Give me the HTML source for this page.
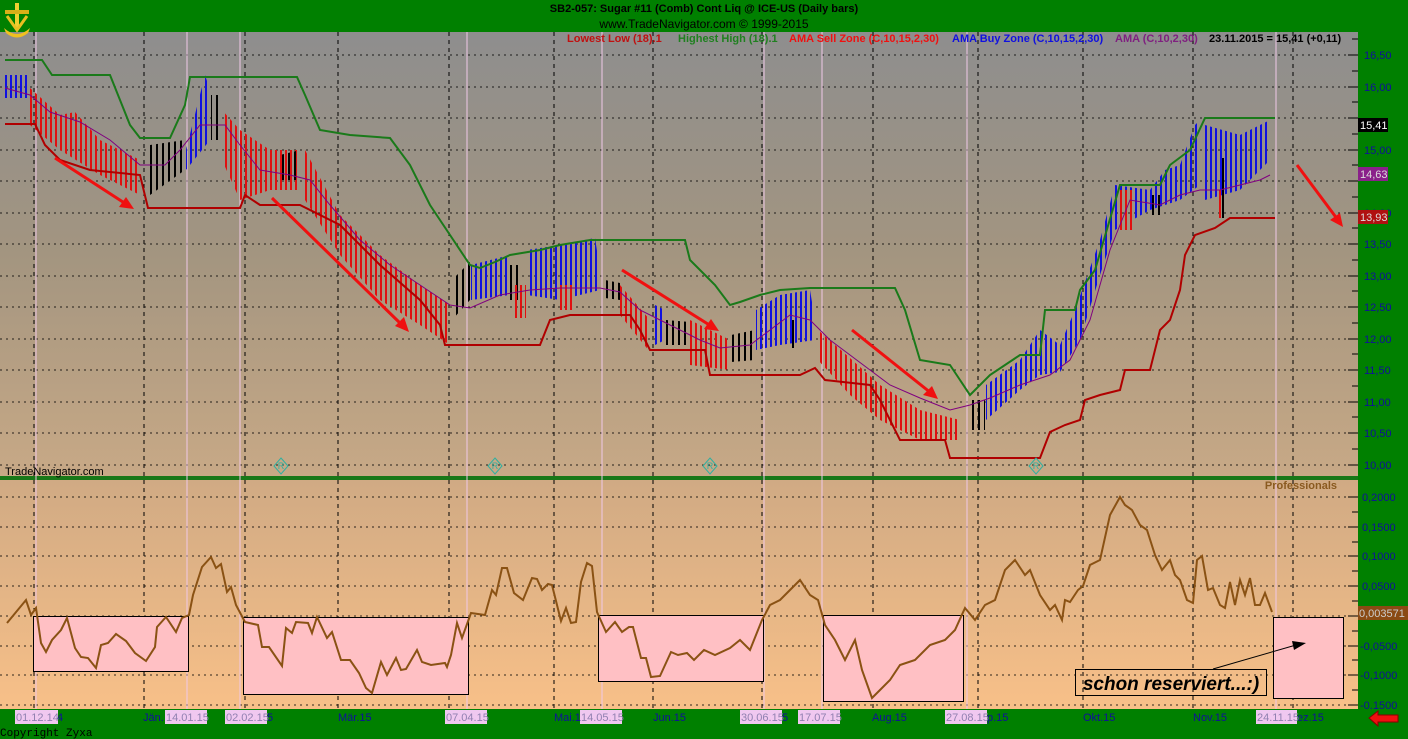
<!DOCTYPE html>
<html><head><meta charset="utf-8"><style>
html,body{margin:0;padding:0;width:1408px;height:739px;overflow:hidden;background:#008000;}
svg{display:block;font-family:"Liberation Sans",sans-serif;}
</style></head><body>
<svg width="1408" height="739" viewBox="0 0 1408 739" xmlns="http://www.w3.org/2000/svg">
<defs>
<linearGradient id="gt" x1="0" y1="0" x2="0" y2="1"><stop offset="0" stop-color="#8e8e8e"/><stop offset="0.5" stop-color="#a39580"/><stop offset="1" stop-color="#c8a986"/></linearGradient>
<linearGradient id="gb" x1="0" y1="0" x2="0" y2="1"><stop offset="0" stop-color="#d0aa84"/><stop offset="1" stop-color="#f8c088"/></linearGradient>
<pattern id="pb" width="5" height="4" patternUnits="userSpaceOnUse"><rect width="2" height="4" fill="#1010e0"/></pattern>
<pattern id="pr" width="5" height="4" patternUnits="userSpaceOnUse"><rect width="2" height="4" fill="#e01010"/></pattern>
<pattern id="pk" width="6" height="4" patternUnits="userSpaceOnUse"><rect width="2" height="4" fill="#000"/></pattern>
</defs>
<rect x="0" y="0" width="1408" height="32" fill="#008000"/>
<rect x="0" y="32" width="1358" height="445" fill="url(#gt)"/>
<rect x="0" y="480" width="1358" height="229" fill="url(#gb)"/>
<rect x="0" y="476" width="1358" height="4" fill="#187818"/>
<g stroke="#000" stroke-width="1" stroke-dasharray="2,4" opacity="0.8">
<path d="M0 55H1355M0 87H1355M0 118H1355M0 150H1355M0 181H1355M0 213H1355M0 244H1355M0 276H1355M0 307H1355M0 339H1355M0 370H1355M0 402H1355M0 433H1355M0 465H1355"/>
<path d="M0 497H1355M0 527H1355M0 556H1355M0 586H1355M0 616H1355M0 646H1355M0 675H1355M0 705H1355"/>
</g>
<g stroke="#f0c8e8" stroke-width="1">
<path d="M36 32V709M187 32V709M240 32V709M467 32V709M602 32V709M764 32V709M822 32V709M967 32V709M1276 32V709"/>
</g>
<g stroke="#000" stroke-width="1" stroke-dasharray="4,4">
<path d="M34 32V709M144 32V709M245 32V709M338 32V709M449 32V709M554 32V709M653 32V709M762 32V709M873 32V709M978 32V709M1083 32V709M1193 32V709M1293 32V709"/>
</g>
<g>
<polygon fill="url(#pb)" points="5,75 28,75 28,98 5,98"/>
<polygon fill="url(#pr)" points="30,88 60,115 75,112 100,140 140,160 140,195 100,175 60,150 30,125"/>
<polygon fill="url(#pk)" points="150,145 185,140 185,170 150,195"/>
<polygon fill="url(#pb)" points="186,150 205,75 210,90 210,140 186,170"/>
<polygon fill="url(#pk)" points="211,95 220,95 220,140 211,140"/>
<polygon fill="url(#pr)" points="222,110 240,130 270,150 300,150 300,190 270,190 240,200 222,160"/>
<polygon fill="url(#pk)" points="280,155 300,150 300,180 280,180"/>
<polygon fill="url(#pr)" points="305,150 340,215 380,255 420,285 450,305 450,345 420,325 380,300 340,255 305,200"/>
<polygon fill="url(#pk)" points="452,280 470,262 470,300 452,320"/>
<polygon fill="url(#pb)" points="471,265 510,255 510,295 471,300"/>
<polygon fill="url(#pk)" points="510,265 520,265 520,300 510,300"/>
<polygon fill="url(#pr)" points="515,285 526,285 526,318 515,318"/>
<polygon fill="url(#pb)" points="527,250 560,245 595,238 600,270 600,290 560,300 527,295"/>
<polygon fill="url(#pr)" points="560,285 575,285 575,310 560,310"/>
<polygon fill="url(#pk)" points="605,280 620,283 620,300 605,298"/>
<polygon fill="url(#pr)" points="620,285 650,320 650,352 620,315"/>
<polygon fill="url(#pb)" points="655,305 665,310 665,340 655,345"/>
<polygon fill="url(#pk)" points="666,320 690,322 690,345 666,345"/>
<polygon fill="url(#pr)" points="690,320 730,340 730,370 690,365"/>
<polygon fill="url(#pk)" points="731,335 755,330 755,360 731,362"/>
<polygon fill="url(#pb)" points="756,310 780,295 810,290 815,320 815,340 780,345 756,350"/>
<polygon fill="url(#pk)" points="790,320 798,320 798,348 790,348"/>
<polygon fill="url(#pr)" points="818,330 850,358 880,385 920,410 960,420 960,440 920,440 880,420 850,395 818,360"/>
<polygon fill="url(#pk)" points="970,400 985,400 985,430 970,430"/>
<polygon fill="url(#pb)" points="986,385 1020,360 1040,330 1060,345 1075,310 1100,240 1115,185 1150,190 1165,170 1180,165 1195,125 1200,120 1200,185 1180,200 1150,210 1115,230 1100,275 1080,340 1060,372 1040,375 1020,390 986,420"/>
<polygon fill="url(#pr)" points="1120,190 1135,190 1135,230 1120,230"/>
<polygon fill="url(#pk)" points="1150,195 1160,195 1160,215 1150,215"/>
<polygon fill="url(#pb)" points="1205,125 1240,135 1270,120 1270,160 1240,190 1205,200"/>
<path d="M1223 158V218" stroke="#000" stroke-width="2"/>
<path d="M1220 190V218" stroke="#e01010" stroke-width="2"/>
</g>
<polyline fill="none" stroke="#1a7a1a" stroke-width="2" points="5,60 42,60 52,75 110,75 120,100 130,125 140,138 170,138 185,105 190,77 297,77 305,95 320,130 350,135 390,138 410,165 430,205 450,235 470,265 480,268 495,262 510,255 540,250 560,245 590,240 685,240 690,260 700,270 715,285 730,305 740,302 760,295 780,290 810,288 895,288 905,310 920,360 950,365 960,380 970,395 990,375 1020,355 1040,355 1045,310 1075,310 1080,290 1095,270 1120,185 1160,185 1170,165 1190,150 1205,118 1275,118"/>
<polyline fill="none" stroke="#b00000" stroke-width="2" points="5,124 35,124 45,145 60,160 90,170 140,175 148,208 240,208 245,195 260,205 300,205 340,225 380,265 420,300 440,325 445,345 540,345 550,320 570,315 630,315 640,330 650,350 705,350 710,375 800,375 815,368 825,380 870,385 880,400 900,440 945,440 950,458 1040,458 1050,432 1065,425 1080,420 1085,400 1100,395 1120,390 1125,370 1150,370 1160,330 1170,320 1180,290 1185,255 1195,235 1215,228 1230,218 1275,218"/>
<polyline fill="none" stroke="#800080" stroke-width="1" points="5,88 30,95 50,112 80,122 110,140 140,165 165,165 180,150 200,125 225,125 240,145 260,170 290,175 310,180 330,205 360,240 390,265 420,285 450,305 470,308 500,295 530,290 560,288 600,288 620,292 640,310 670,325 700,340 720,348 750,345 770,330 790,315 810,320 830,340 850,355 870,370 890,385 920,398 950,410 970,405 990,398 1020,385 1050,375 1070,360 1090,320 1110,250 1130,200 1160,205 1180,195 1200,190 1220,190 1240,185 1260,180 1270,175"/>
<g stroke="#f01010" stroke-width="3" fill="#f01010">
<line x1="55" y1="158" x2="126" y2="204"/><polygon stroke="none" points="134,209 119,207 126,197"/>
<line x1="272" y1="198" x2="402" y2="325"/><polygon stroke="none" points="409,332 395,326 404,317"/>
<line x1="622" y1="270" x2="711" y2="326"/><polygon stroke="none" points="719,331 704,329 711,319"/>
<line x1="852" y1="330" x2="931" y2="393"/><polygon stroke="none" points="938,399 923,395 932,386"/>
<line x1="1297" y1="165" x2="1338" y2="220"/><polygon stroke="none" points="1343,227 1330,220 1340,213"/>
</g>
<g fill="none" stroke="#30b0a0" stroke-width="1">
<path d="M281 458l7 8-7 8-7-8z M495 458l7 8-7 8-7-8z M710 458l7 8-7 8-7-8z M1036 458l7 8-7 8-7-8z"/>
</g>
<g fill="#30b0a0" font-size="9" text-anchor="middle"><text x="281" y="469">R</text><text x="495" y="469">R</text><text x="710" y="469">R</text><text x="1036" y="469">R</text></g>
<text x="5" y="475" font-size="11" fill="#000">TradeNavigator.com</text>
<text x="1337" y="489" font-size="11" font-weight="bold" fill="#8a5a20" text-anchor="end">Professionals</text>
<g fill="#ffc0c4" stroke="#000" stroke-width="1">
<rect x="33.5" y="616.5" width="155" height="55"/>
<rect x="243.5" y="617.5" width="225" height="77"/>
<rect x="598.5" y="615.5" width="165" height="66"/>
<rect x="823.5" y="615.5" width="140" height="86"/>
<rect x="1273.5" y="617.5" width="70" height="81"/>
</g>
<polyline fill="none" stroke="#8a5214" stroke-width="2" points="7,623 26,600 31,615 36,608 41,643 46,652 52,640 61,630 67,618 75,648 81,657 88,658 96,668 101,645 108,643 116,634 126,641 135,653 146,661 155,647 157,627 166,617 176,632 182,618 189,615 193,595 202,567 211,557 216,568 221,564 227,592 231,587 236,605 245,622 258,625 262,647 269,647 282,666 286,628 292,633 296,622 308,623 312,633 317,617 327,638 332,632 341,660 350,660 359,673 366,688 372,693 381,662 387,675 396,658 401,670 406,669 417,650 422,662 431,665 445,663 447,667 451,655 457,623 462,638 471,613 485,615 492,590 496,595 502,568 507,568 514,593 523,600 532,578 537,579 542,590 548,584 552,585 561,621 566,608 571,623 576,622 581,582 587,563 592,566 597,612 606,632 615,622 622,632 629,627 633,627 641,658 646,658 651,677 660,676 671,652 678,655 687,653 694,660 704,650 715,655 730,648 740,640 750,650 762,620 770,605 780,600 800,580 810,595 818,600 825,625 835,640 845,660 855,640 862,670 872,698 880,690 890,680 900,665 915,660 930,645 945,640 955,630 965,608 975,620 985,605 995,600 1005,570 1015,560 1025,575 1030,570 1040,595 1050,610 1055,605 1062,620 1065,600 1070,602 1078,590 1083,586 1090,565 1100,560 1110,515 1120,497 1125,505 1132,510 1140,525 1147,530 1155,555 1162,570 1170,560 1175,575 1180,580 1187,600 1193,603 1197,560 1202,556 1208,590 1213,588 1220,605 1225,608 1230,582 1235,605 1240,580 1245,595 1250,578 1255,605 1260,605 1265,593 1272,612"/>
<rect x="1075.5" y="669.5" width="191" height="26" fill="none" stroke="#000"/>
<text x="1171" y="690" font-size="19" font-weight="bold" font-style="italic" text-anchor="middle" fill="#000">schon reserviert...:)</text>
<line x1="1213" y1="669" x2="1296" y2="645" stroke="#000" stroke-width="1"/>
<polygon points="1306,643 1294,650 1292,641" fill="#000"/>
<g font-size="11" fill="#000" text-anchor="middle">
<text x="704" y="12" font-weight="bold">SB2-057:  Sugar #11 (Comb) Cont Liq @ ICE-US  (Daily bars)</text>
<text x="704" y="28" font-size="12">www.TradeNavigator.com © 1999-2015</text>
</g>
<g font-size="11" font-weight="bold">
<text x="567" y="42" fill="#c01010">Lowest Low (18).1</text>
<text x="678" y="42" fill="#208020">Highest High (18).1</text>
<text x="789" y="42" fill="#f01010">AMA Sell Zone (C,10,15,2,30)</text>
<text x="952" y="42" fill="#1010e0">AMA Buy Zone (C,10,15,2,30)</text>
<text x="1115" y="42" fill="#802080">AMA (C,10,2,30)</text>
<text x="1209" y="42" fill="#000">23.11.2015 = 15,41 (+0,11)</text>
</g>
<g>
<rect x="15" y="3" width="4" height="26" fill="#f0d030"/>
<rect x="5" y="10" width="24" height="4" fill="#d8b018"/>
<path d="M7 16 L17 30 L27 16" fill="none" stroke="#e8c020" stroke-width="3"/>
<path d="M4 28 Q17 40 30 28 L28 33 Q17 42 6 33z" fill="#f0c020"/>
</g>
<rect x="1358" y="32" width="50" height="677" fill="#008000"/>
<g stroke="#000" stroke-width="1">
<path d="M1348 55H1358M1348 87H1358M1348 118H1358M1348 150H1358M1348 181H1358M1348 213H1358M1348 244H1358M1348 276H1358M1348 307H1358M1348 339H1358M1348 370H1358M1348 402H1358M1348 433H1358M1348 465H1358"/>
<path d="M1352 39H1358M1352 71H1358M1352 102H1358M1352 134H1358M1352 165H1358M1352 197H1358M1352 228H1358M1352 260H1358M1352 291H1358M1352 323H1358M1352 354H1358M1352 386H1358M1352 417H1358M1352 449H1358"/>
<path d="M1348 497H1358M1348 527H1358M1348 556H1358M1348 586H1358M1348 616H1358M1348 646H1358M1348 675H1358M1348 705H1358"/>
<path d="M1352 512H1358M1352 542H1358M1352 571H1358M1352 601H1358M1352 631H1358M1352 660H1358M1352 690H1358"/>
</g>
<g font-size="11" fill="#10109a">
<text x="1364" y="59">16,50</text><text x="1364" y="91">16,00</text><text x="1364" y="154">15,00</text><text x="1364" y="217">14,00</text><text x="1364" y="248">13,50</text><text x="1364" y="280">13,00</text><text x="1364" y="311">12,50</text><text x="1364" y="343">12,00</text><text x="1364" y="374">11,50</text><text x="1364" y="406">11,00</text><text x="1364" y="437">10,50</text><text x="1364" y="469">10,00</text>
<text x="1362" y="501">0,2000</text><text x="1362" y="531">0,1500</text><text x="1362" y="560">0,1000</text><text x="1362" y="590">0,0500</text><text x="1360" y="650">-0,0500</text><text x="1360" y="679">-0,1000</text><text x="1360" y="709">-0,1500</text>
</g>
<rect x="1358" y="118" width="30" height="14" fill="#000"/><text x="1360" y="129" font-size="11" fill="#fff">15,41</text>
<rect x="1358" y="167" width="30" height="14" fill="#8a208a"/><text x="1360" y="178" font-size="11" fill="#ddd">14,63</text>
<rect x="1358" y="210" width="30" height="14" fill="#b01010"/><text x="1360" y="221" font-size="11" fill="#ddd">13,93</text>
<rect x="1358" y="606" width="50" height="14" fill="#8a4a14"/><text x="1359" y="617" font-size="11" fill="#ccc">0,003571</text>
<rect x="0" y="709" width="1408" height="30" fill="#008000"/>
<g font-size="11">
<rect x="15" y="710" width="43" height="14" fill="#f0c8f0"/>
<rect x="165" y="710" width="42" height="14" fill="#f0c8f0"/>
<rect x="225" y="710" width="42" height="14" fill="#f0c8f0"/>
<rect x="445" y="710" width="42" height="14" fill="#f0c8f0"/>
<rect x="580" y="710" width="42" height="14" fill="#f0c8f0"/>
<rect x="740" y="710" width="42" height="14" fill="#f0c8f0"/>
<rect x="798" y="710" width="42" height="14" fill="#f0c8f0"/>
<rect x="945" y="710" width="42" height="14" fill="#f0c8f0"/>
<rect x="1256" y="710" width="41" height="14" fill="#f0c8f0"/>
<g fill="#10109a">
<text x="57" y="721">4</text><text x="143" y="721">Jän.</text><text x="267" y="721">5</text><text x="338" y="721">Mär.15</text><text x="554" y="721">Mai.1</text><text x="653" y="721">Jun.15</text><text x="782" y="721">5</text><text x="872" y="721">Aug.15</text><text x="987" y="721">p.15</text><text x="1083" y="721">Okt.15</text><text x="1193" y="721">Nov.15</text><text x="1297" y="721">ez.15</text>
</g>
<g fill="#9080b0">
<text x="16" y="721">01.12.14</text><text x="166" y="721">14.01.15</text><text x="226" y="721">02.02.15</text><text x="446" y="721">07.04.15</text><text x="581" y="721">14.05.15</text><text x="741" y="721">30.06.15</text><text x="799" y="721">17.07.15</text><text x="946" y="721">27.08.15</text><text x="1257" y="721">24.11.15</text>
</g>
</g>
<text x="0" y="736" font-family="Liberation Mono,monospace" font-size="11" fill="#000">Copyright Zyxa</text>
<polygon points="1369,718 1378,711 1378,715 1398,715 1398,722 1378,722 1378,726" fill="#f01010" stroke="#800" stroke-width="1"/>
</svg>
</body></html>
